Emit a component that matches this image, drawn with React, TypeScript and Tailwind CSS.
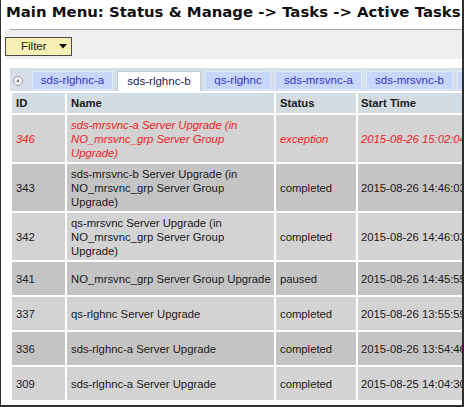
import React from "react";

type Row = {
  id: string;
  name: string[];
  status: string;
  time: string;
  error?: boolean;
};

const rows: Row[] = [
  {
    id: "346",
    name: ["sds-mrsvnc-a Server Upgrade (in", "NO_mrsvnc_grp Server Group", "Upgrade)"],
    status: "exception",
    time: "2015-08-26 15:02:04",
    error: true,
  },
  {
    id: "343",
    name: ["sds-mrsvnc-b Server Upgrade (in", "NO_mrsvnc_grp Server Group", "Upgrade)"],
    status: "completed",
    time: "2015-08-26 14:46:03",
  },
  {
    id: "342",
    name: ["qs-mrsvnc Server Upgrade (in", "NO_mrsvnc_grp Server Group", "Upgrade)"],
    status: "completed",
    time: "2015-08-26 14:46:03",
  },
  {
    id: "341",
    name: ["NO_mrsvnc_grp Server Group Upgrade"],
    status: "paused",
    time: "2015-08-26 14:45:55",
  },
  { id: "337", name: ["qs-rlghnc Server Upgrade"], status: "completed", time: "2015-08-26 13:55:59" },
  { id: "336", name: ["sds-rlghnc-a Server Upgrade"], status: "completed", time: "2015-08-26 13:54:46" },
  { id: "309", name: ["sds-rlghnc-a Server Upgrade"], status: "completed", time: "2015-08-25 14:04:30" },
];

const tabs = [
  { label: "sds-rlghnc-a", w: "w-[81px]" },
  { label: "sds-rlghnc-b", w: "w-[84px]", active: true },
  { label: "qs-rlghnc", w: "w-[66px]" },
  { label: "sds-mrsvnc-a", w: "w-[87px]" },
  { label: "sds-mrsvnc-b", w: "w-[87px]" },
  { label: "qs-mrsvnc", w: "w-[80px]" },
];

export default function App() {
  return (
    <div className="w-[464px] h-[407px] overflow-hidden bg-white border-l border-r-2 border-b-2 border-[#2e2e2e] font-['Liberation_Sans',Arial,sans-serif] text-[11.3px] text-[#1a1a1a]">
      {/* Title */}
      <div className="h-[29px] pl-[5px] pt-[4px] whitespace-nowrap font-['DejaVu_Sans',Verdana,sans-serif] font-bold text-[14.9px] leading-[17px] text-[#111]">
        Main Menu: Status &amp; Manage -&gt; Tasks -&gt; Active Tasks
      </div>
      <div className="ml-[9px] h-px bg-[#a8a8a8]" />

      {/* Filter band */}
      <div className="ml-[4px] h-[29px] bg-[#efefef] pt-[7px]">
        <div className="w-[67px] h-[19px] bg-[#f7f0b6] border border-[#4a4a4a] flex items-center pl-[15px] pr-[4px] leading-none">
          <span className="text-[11.5px] text-[#1a1a1a]">Filter</span>
          <svg className="ml-auto" width="8" height="5" viewBox="0 0 8 5">
            <polygon points="0,0 8,0 4,4.5" fill="#111" />
          </svg>
        </div>
      </div>

      <div className="h-[9px]" />

      {/* Tab strip */}
      <div className="ml-[9px] h-[23px] bg-[#d6dfe9] flex items-start pt-[3px] pl-[3px] whitespace-nowrap text-[11.5px]">
        <div className="h-[19px] w-[10px] flex items-center shrink-0">
          <svg width="10" height="10" viewBox="0 0 10 10">
            <circle cx="5" cy="5" r="4.5" fill="#eeeeee" stroke="#a4a4a4" strokeWidth="1" />
            <polygon points="3.2,5 6,3.2 6,6.8" fill="#7a7a7a" />
          </svg>
        </div>
        <div className="flex gap-[4px] ml-[9px]">
          {tabs.map((t) =>
            t.active ? (
              <div
                key={t.label}
                className={`${t.w} shrink-0 h-[20px] bg-white border-t border-l border-r border-[#c4ccd6] flex items-center justify-center text-[#1b1b5e] leading-none`}
              >
                {t.label}
              </div>
            ) : (
              <div
                key={t.label}
                className={`${t.w} shrink-0 h-[19px] bg-[#c7d6fa] border border-[#e2e9f6] flex items-center justify-center text-[#3434c8] leading-none`}
              >
                {t.label}
              </div>
            )
          )}
        </div>
      </div>

      {/* Table */}
      <table className="ml-[9px] w-[490px] table-fixed border-separate border-spacing-[2px] bg-white">
        <thead>
          <tr>
            <th className="w-[53px] h-[20px] bg-[#d4dce3] text-left font-bold pl-[4px] py-0 leading-[14px]">ID</th>
            <th className="w-[207px] h-[20px] bg-[#d4dce3] text-left font-bold pl-[4px] py-0 leading-[14px]">Name</th>
            <th className="w-[80px] h-[20px] bg-[#d4dce3] text-left font-bold pl-[4px] py-0 leading-[14px]">Status</th>
            <th className="w-[140px] h-[20px] bg-[#d4dce3] text-left font-bold pl-[3px] py-0 leading-[14px] whitespace-nowrap">Start Time</th>
          </tr>
        </thead>
        <tbody>
          {rows.map((r, i) => {
            const bg = i % 2 === 0 ? "bg-[#d3d3d3]" : "bg-[#c4c4c4]";
            const tc = r.error ? "text-[#ec1c24] italic" : "text-[#1a1a1a]";
            const cell = `${bg} ${tc} h-[33px] py-[2.5px] leading-[14px] align-middle whitespace-nowrap`;
            return (
              <tr key={r.id}>
                <td className={`${cell} pl-[4px]`}>{r.id}</td>
                <td className={`${cell} pl-[4px]`}>
                  {r.name.map((line, j) => (
                    <div key={j}>{line}</div>
                  ))}
                </td>
                <td className={`${cell} pl-[4px]`}>{r.status}</td>
                <td className={`${cell} pl-[3px]`}>{r.time}</td>
              </tr>
            );
          })}
        </tbody>
      </table>
    </div>
  );
}
